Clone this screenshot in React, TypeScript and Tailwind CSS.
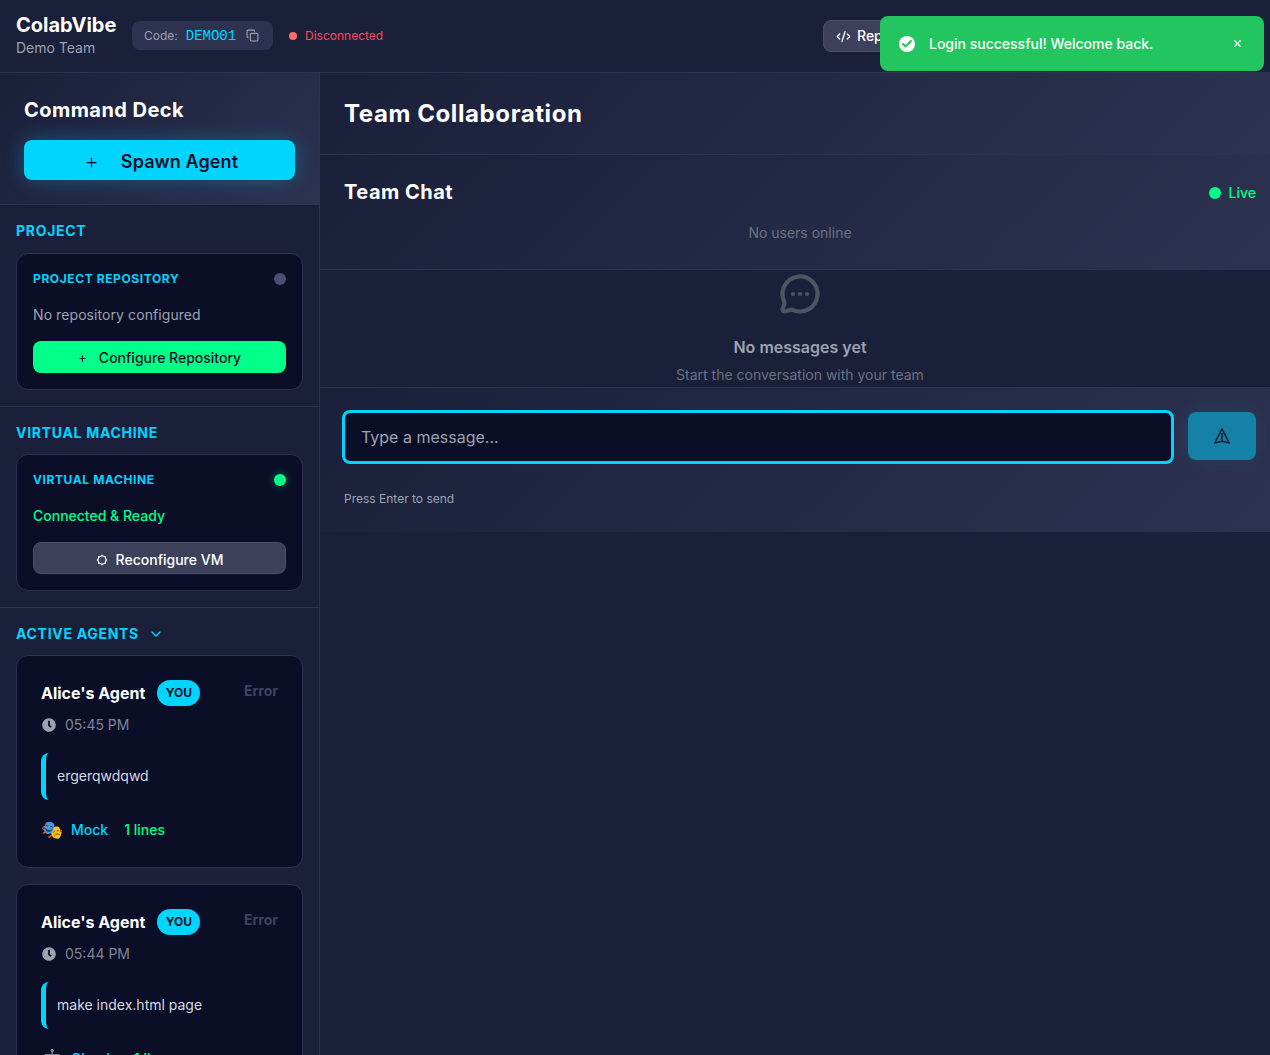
import { Check, ChevronDown, CodeXml, Copy, MessageCircleMore, Plus, X } from "lucide-react";
import { FaClock } from "react-icons/fa";

const panelGradient = "bg-[linear-gradient(135deg,#1a1f3a,#2d3250)]";

function StatusCard({
  title,
  dotClass,
  children,
}: {
  title: string;
  dotClass: string;
  children: React.ReactNode;
}) {
  return (
    <div className="rounded-xl border border-[#2d3250] bg-[#0a0e27] px-4 pt-4 pb-4">
      <div className="flex h-[18px] items-center justify-between">
        <h4 className="text-xs font-bold tracking-[0.6px] text-[#00d4ff]">{title}</h4>
        <span className={`h-3 w-3 rounded-full ${dotClass}`} />
      </div>
      {children}
    </div>
  );
}

function AgentCard({
  time,
  prompt,
  emoji,
  model,
}: {
  time: string;
  prompt: string;
  emoji: string;
  model: string;
}) {
  return (
    <div className="rounded-xl border border-[#2d3250] bg-[#0a0e27] px-6 pt-6 pb-[27px]">
      <div className="flex items-start justify-between">
        <div className="flex h-[26px] items-center gap-3">
          <span className="text-base font-bold leading-6 text-white">Alice's Agent</span>
          <span className="flex h-[26px] w-[43px] items-center justify-center rounded-full bg-[#00d4ff] text-xs font-bold text-[#0a0e27]">
            YOU
          </span>
        </div>
        <span className="mt-[1px] text-sm font-bold leading-5 text-[#3f4360]">Error</span>
      </div>
      <div className="mt-[9px] flex h-5 items-center gap-[10px] pl-[1px] text-sm text-[#7f8494]">
        <FaClock className="h-[14px] w-[14px] text-[#9ca3af]" />
        <span className="-ml-[1px]">{time}</span>
      </div>
      <div className="mt-[18px] flex h-[47px] items-center rounded-l-lg border-l-[5px] border-[#00d4ff] pb-[2px] pl-[11px] text-sm text-[#d6d8e0]">
        {prompt}
      </div>
      <div className="mt-5 flex h-5 items-center text-sm font-medium">
        <span className="w-[30px] text-lg leading-none">{emoji}</span>
        <span className="text-[#00d4ff]">{model}</span>
        <span className="ml-4 text-[#00ff88]">1 lines</span>
      </div>
    </div>
  );
}

export default function App() {
  return (
    <div className="relative h-screen overflow-hidden bg-[#1a1f3a] font-['Inter',sans-serif] text-white">
      <header className="flex h-[73px] items-center border-b border-[#2d3250] bg-[#1a1f3a] px-4">
        <div className="w-[116px] -translate-y-[1px]">
          <div className="text-xl font-bold leading-6">ColabVibe</div>
          <div className="mt-[1px] text-sm leading-5 text-[#9ca3af]">Demo Team</div>
        </div>
        <div className="-mt-[1px] flex h-[29px] w-[141px] items-center rounded-lg bg-[#2d3250] px-3 text-xs">
          <span className="text-[#9ca3af]">Code:</span>
          <span className="ml-2 font-['Liberation_Mono',monospace] text-sm text-[#00d4ff]">DEMO01</span>
          <Copy className="ml-[10px] h-[13px] w-[13px] text-[#9ca3af]" />
        </div>
        <div className="ml-4 flex items-center gap-2 text-xs text-[#ff4757]">
          <span className="h-2 w-2 rounded-full bg-[#ff6b6b]" />
          Disconnected
        </div>
        <div className="ml-auto flex w-[431px]">
          <button className="flex h-8 items-center gap-[6px] rounded-lg border border-[#4a4f6f] bg-[#3d405b] px-3 text-sm font-medium">
            <CodeXml className="h-[15px] w-[15px]" />
            Repository
          </button>
        </div>
      </header>

      <div className="flex h-[982px]">
        <aside className="w-80 shrink-0 overflow-hidden border-r border-[#2d3250]">
          <section className={`h-[132px] border-b border-[#2d3250] px-6 pt-6 ${panelGradient}`}>
            <h2 className="text-xl font-bold leading-[26px] tracking-[0.45px]">Command Deck</h2>
            <button className="mt-[17px] flex h-10 w-[271px] items-center justify-center gap-[22px] rounded-lg bg-[#00d4ff] pt-1 pl-[3px] text-lg font-semibold tracking-[0.1px] text-[#0a0e27] shadow-[0_0_20px_rgba(0,212,255,0.3)]">
              <Plus className="h-[15px] w-[15px]" />
              Spawn Agent
            </button>
          </section>

          <section className="h-[202px] border-b border-[#2d3250] px-4 pt-[15px]">
            <h3 className="text-sm font-bold leading-[21px] tracking-[0.7px] text-[#00d4ff]">PROJECT</h3>
            <div className="mt-[12px]">
              <StatusCard title="PROJECT REPOSITORY" dotClass="bg-[#4a4f6f]">
                <p className="mt-[17px] text-sm leading-5 tracking-[0.08px] text-[#9ca3af]">No repository configured</p>
                <button className="mt-4 flex h-8 w-full items-center justify-center gap-3 rounded-lg bg-[#00ff88] pt-[2px] text-sm font-medium text-[#0a0e27]">
                  <Plus className="h-[9px] w-[9px]" strokeWidth={3} />
                  Configure Repository
                </button>
              </StatusCard>
            </div>
          </section>

          <section className="h-[201px] border-b border-[#2d3250] px-4 pt-[15px]">
            <h3 className="text-sm font-bold leading-[21px] tracking-[0.7px] text-[#00d4ff]">VIRTUAL MACHINE</h3>
            <div className="mt-[11px]">
              <StatusCard title="VIRTUAL MACHINE" dotClass="bg-[#00ff88] shadow-[0_0_10px_rgba(0,255,136,0.4)]">
                <p className="mt-[17px] text-sm font-medium leading-5 text-[#00ff88]">Connected &amp; Ready</p>
                <button className="mt-4 flex h-8 w-full items-center justify-center gap-2 rounded-lg border border-[#4a4f6f] bg-[#3d405b] pt-[3px] text-sm font-medium">
                  <svg viewBox="0 0 12 12" className="h-3 w-3" fill="none" stroke="currentColor" strokeWidth="1.2">
                    <circle cx="6" cy="6" r="4" />
                    <path d="M6 .8v1.2M6 10v1.2M.8 6H2M10 6h1.2M2.3 2.3l.9.9M8.8 8.8l.9.9M2.3 9.7l.9-.9M8.8 3.2l.9-.9" />
                  </svg>
                  Reconfigure VM
                </button>
              </StatusCard>
            </div>
          </section>

          <section className="px-4 pt-[15px]">
            <h3 className="flex items-center gap-[9px] text-sm font-bold leading-[21px] tracking-[0.7px] text-[#00d4ff]">
              ACTIVE AGENTS
              <ChevronDown className="h-4 w-4" />
            </h3>
            <div className="mt-[11px] flex flex-col gap-4">
              <AgentCard time="05:45 PM" prompt="ergerqwdqwd" emoji="🎭" model="Mock" />
              <AgentCard time="05:44 PM" prompt="make index.html page" emoji="🤖" model="Claude" />
            </div>
          </section>
        </aside>

        <main className="min-w-0 flex-1">
          <div className={`flex h-[82px] items-center border-b border-[#2d3250] px-6 ${panelGradient}`}>
            <h1 className="text-2xl font-bold tracking-[0.6px]">Team Collaboration</h1>
          </div>
          <div className={`h-[115px] border-b border-[#2d3250] pr-[14px] pl-6 pt-6 ${panelGradient}`}>
            <div className="flex h-[27px] items-center justify-between">
              <h2 className="-mt-[2px] text-xl font-bold tracking-[0.5px]">Team Chat</h2>
              <div className="flex items-center gap-2 text-sm font-medium text-[#00ff88]">
                <span className="h-3 w-3 rounded-full bg-[#00ff88]" />
                Live
              </div>
            </div>
            <p className="mt-[17px] text-center text-sm leading-5 text-[#6b7280]">No users online</p>
          </div>
          <div className="flex h-[118px] flex-col items-center overflow-hidden border-b border-[#2d3250] pl-[10px] pt-[3px]">
            <MessageCircleMore className="h-[42px] w-[42px] text-[#4b5563]" strokeWidth={2.4} />
            <p className="mt-5 text-base font-semibold leading-6 text-[#9ca3af]">No messages yet</p>
            <p className="mt-[6px] text-sm leading-5 text-[#6b7280]">Start the conversation with your team</p>
          </div>
          <div className={`h-[144px] pr-[14px] pl-[22px] pt-[22px] ${panelGradient}`}>
            <div className="flex items-start gap-[14px]">
              <input
                readOnly
                placeholder="Type a message..."
                className="h-[54px] min-w-0 flex-1 rounded-lg border-[3px] border-[#00d4ff] bg-[#0a0e27] px-4 text-base outline-none placeholder:text-[#9ca3af]"
              />
              <button className="mt-[2px] flex h-12 w-[68px] items-center justify-center rounded-lg bg-[#00d4ff]/50 shadow-[0_0_20px_rgba(0,212,255,0.1)]">
                <svg viewBox="0 0 18 18" className="h-[18px] w-[18px]" fill="none" stroke="#1a1f3a" strokeWidth="1.6" strokeLinejoin="round">
                  <path d="M9 1.8 16.2 16 9 14.2 1.8 16Z" />
                  <path d="M9 6v8.2" />
                </svg>
              </button>
            </div>
            <p className="mt-[26px] ml-[2px] text-xs leading-[18px] text-[#9ca3af]">Press Enter to send</p>
          </div>
        </main>
      </div>

      <div className="absolute top-4 right-[6px] flex h-[55px] w-[384px] items-center rounded-lg bg-[#22c55e] pr-[21px] pl-[19px] text-sm font-medium">
        <span className="flex h-4 w-4 items-center justify-center rounded-full bg-white">
          <Check className="h-3 w-3 text-[#22c55e]" strokeWidth={4} />
        </span>
        <span className="ml-[14px] flex-1">Login successful! Welcome back.</span>
        <X className="h-[11px] w-[11px]" strokeWidth={2.5} />
      </div>
    </div>
  );
}
